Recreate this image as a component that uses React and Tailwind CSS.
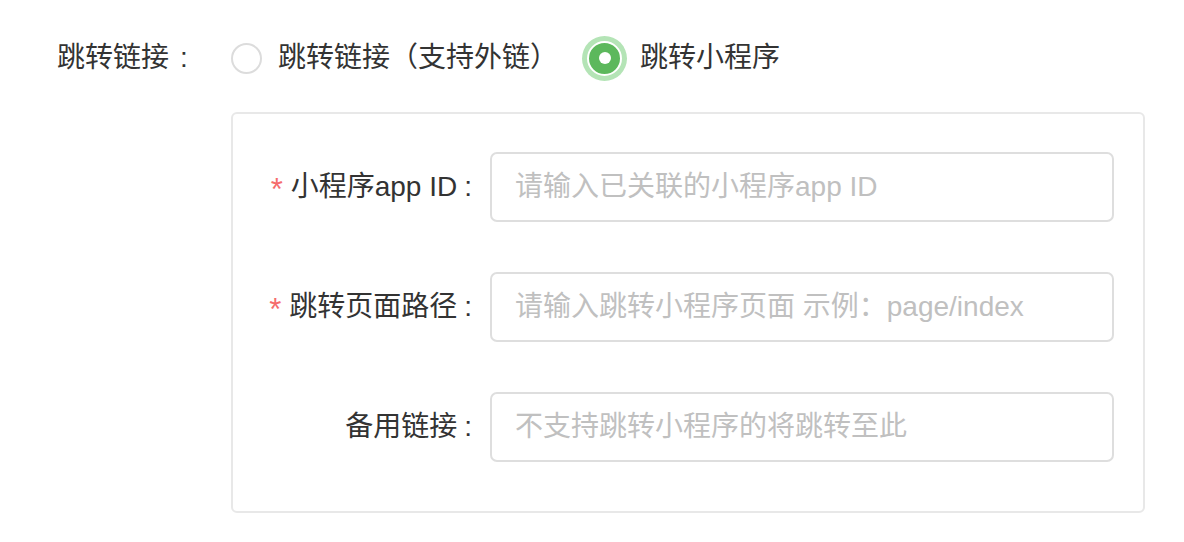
import React from "react";

const font = { fontFamily: '"Liberation Sans", "Noto Sans CJK SC", sans-serif' };

function Row({ required, label, placeholder }) {
  return (
    <div className="flex items-center h-[70px]">
      <div className="w-[257px] flex justify-end items-center pr-[18px] text-[28px] text-[#333333]">
        {required && <span className="text-[#f56c6c] mr-[8px] text-[31px] leading-none mt-[4px]">*</span>}
        <span>{label}</span>
        <span className="ml-[7px]">:</span>
      </div>
      <div className="w-[624px] h-[70px] border-2 border-[#dedede] rounded-[7px] flex items-center pl-[23px] text-[28px] text-[#c0c0c0] bg-white">
        {placeholder}
      </div>
    </div>
  );
}

export default function App() {
  return (
    <div className="w-[1184px] h-[542px] bg-white" style={font}>
      <div className="flex items-center pl-[57px] pt-[36px] h-[80px] text-[28px] text-[#333333]">
        <div className="w-[174px] flex items-center">
          <span>跳转链接</span>
          <span className="ml-[11px]">:</span>
        </div>
        <div className="flex items-center">
          <span className="w-[31px] h-[31px] rounded-full border-2 border-[#dcdcdc] bg-white mr-[16px]"></span>
          <span>跳转链接（支持外链）</span>
        </div>
        <div className="flex items-center ml-[29px]">
          <span className="w-[35px] h-[35px] rounded-full bg-[#5cb85c] border-2 border-white shadow-[0_0_0_5px_#b4e4b6] flex items-center justify-center mr-[18px]">
            <span className="w-[12px] h-[12px] rounded-full bg-white"></span>
          </span>
          <span>跳转小程序</span>
        </div>
      </div>
      <div className="ml-[231px] mt-[32px] w-[914px] h-[401px] border-2 border-[#e8e8e8] rounded-[6px] pt-[38px] flex flex-col gap-[50px]">
        <Row required label="小程序app ID" placeholder="请输入已关联的小程序app ID" />
        <Row required label="跳转页面路径" placeholder="请输入跳转小程序页面 示例：page/index" />
        <Row label="备用链接" placeholder="不支持跳转小程序的将跳转至此" />
      </div>
    </div>
  );
}
